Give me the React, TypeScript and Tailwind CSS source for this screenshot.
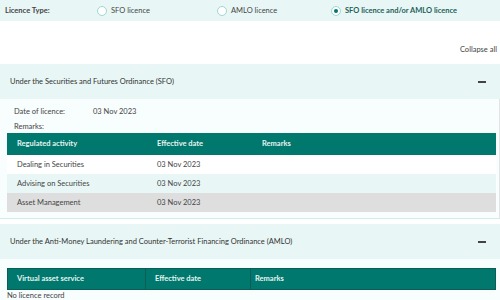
import React from "react";

const sfoRows = [
  { activity: "Dealing in Securities", date: "03 Nov 2023", bg: "bg-white" },
  { activity: "Advising on Securities", date: "03 Nov 2023", bg: "bg-[#e8f7f6]" },
  { activity: "Asset Management", date: "03 Nov 2023", bg: "bg-[#dedede]" },
];

function Radio({ label, checked, width }: { label: string; checked?: boolean; width: string }) {
  return (
    <div className={`flex items-center gap-[4px] ${width}`}>
      <span className="flex h-[10px] w-[10px] items-center justify-center rounded-full border border-[#9fd6d1] bg-white">
        {checked && <span className="h-[4px] w-[4px] rounded-full bg-[#00786d]" />}
      </span>
      <span className={checked ? "text-[#1f5f59] font-bold" : "text-[#444]"}>{label}</span>
    </div>
  );
}

function SectionHeader({ title }: { title: string }) {
  return (
    <div className="flex h-[35px] items-center justify-between bg-[#e8f7f6] pl-[10px] pr-[14px]">
      <span className="text-[#333]">{title}</span>
      <span className="h-[2px] w-[8px] bg-[#444]" />
    </div>
  );
}

export default function App() {
  return (
    <div className="h-[300px] w-[500px] overflow-hidden bg-white text-[7.5px] leading-none" style={{ fontFamily: "Lato, 'Liberation Sans', sans-serif" }}>
      <div className="flex h-[21px] items-center bg-[#e8f7f6] pl-[5px]">
        <span className="w-[92px] font-bold text-[#444]">Licence Type:</span>
        <Radio label="SFO licence" width="w-[120px]" />
        <Radio label="AMLO licence" width="w-[114px]" />
        <Radio label="SFO licence and/or AMLO licence" checked width="w-[150px]" />
      </div>

      <div className="flex h-[43px] items-end justify-end pb-[11px] pr-[3px] text-[#444]">Collapse all</div>

      <SectionHeader title="Under the Securities and Futures Ordinance (SFO)" />
      <div className="h-[119px] border-r border-[#e4e4e4] bg-[#f8fdfd] pt-[8px] pl-[7px] pr-[3px]">
        <div className="flex h-[10px] items-center pl-[7px] text-[#444]">
          <span className="w-[79px]">Date of licence:</span>
          <span>03 Nov 2023</span>
        </div>
        <div className="mt-[5px] mb-[1px] flex h-[10px] items-center pl-[7px] text-[#444]">Remarks:</div>
        <div className="grid grid-cols-[140px_105px_1fr]">
          <div className="flex h-[22px] items-center bg-[#00786d] pl-[10px] font-bold text-[#e6f4f2]">Regulated activity</div>
          <div className="flex h-[22px] items-center bg-[#00786d] pl-[10px] font-bold text-[#e6f4f2]">Effective date</div>
          <div className="flex h-[22px] items-center bg-[#00786d] pl-[10px] font-bold text-[#e6f4f2]">Remarks</div>
          {sfoRows.map((r) => (
            <React.Fragment key={r.activity}>
              <div className={`flex h-[19px] items-center pl-[10px] text-[#444] ${r.bg}`}>{r.activity}</div>
              <div className={`flex h-[19px] items-center pl-[10px] text-[#444] ${r.bg}`}>{r.date}</div>
              <div className={`h-[19px] ${r.bg}`} />
            </React.Fragment>
          ))}
        </div>
      </div>
      <div className="h-[6px] border-t border-[#cfeeea] bg-white" />

      <SectionHeader title="Under the Anti-Money Laundering and Counter-Terrorist Financing Ordinance (AMLO)" />
      <div className="h-[41px] bg-[#f8fdfd] pt-[9px] pl-[7px] pr-[4px]">
        <div className="grid grid-cols-[138px_105px_1fr] border border-[#0b5e56] bg-[#00786d] font-bold text-[#e6f4f2]">
          <div className="flex h-[20px] items-center border-r border-[#0b5e56] pl-[9px]">Virtual asset service</div>
          <div className="flex h-[20px] items-center border-r border-[#0b5e56] pl-[9px]">Effective date</div>
          <div className="flex h-[20px] items-center pl-[4px]">Remarks</div>
        </div>
        <div className="-ml-[7px] pt-[2px] pl-[7px] text-[#444]">No licence record</div>
      </div>
    </div>
  );
}
